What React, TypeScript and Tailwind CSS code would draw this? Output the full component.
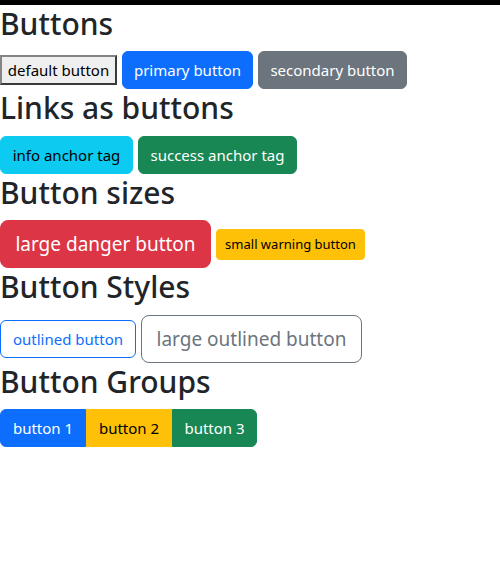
import React from "react";

const base =
  "inline-flex items-center justify-center whitespace-nowrap border border-solid";
const h2 = "mb-2 text-[30px] font-medium leading-[38.4px] text-[#212529]";

export default function App() {
  return (
    <div className="min-h-[568px] bg-white font-['Noto_Sans','Open_Sans',sans-serif] text-[15px] leading-[24px] text-[#212529]">
      <div className="h-[5px] bg-black" />
      <h2 className={h2}>Buttons</h2>
      <div className="flex h-[38px] items-center gap-[5px]">
        <button className="h-[30px] w-[117px] border-2 border-t-[#858585] border-l-[#858585] border-b-[#3a3a3a] border-r-[#3a3a3a] bg-[#efefef] px-[4px] text-[15px] leading-[24px] text-black">
          default button
        </button>
        <button className={`${base} h-[38px] w-[131px] rounded-[6px] border-[#0d6efd] bg-[#0d6efd] text-white`}>
          primary button
        </button>
        <button className={`${base} h-[38px] w-[149px] rounded-[6px] border-[#6c757d] bg-[#6c757d] text-white`}>
          secondary button
        </button>
      </div>

      <h2 className={h2}>Links as buttons</h2>
      <div className="flex h-[38px] items-center gap-[5px]">
        <a className={`${base} h-[38px] w-[133px] rounded-[6px] border-[#0dcaf0] bg-[#0dcaf0] text-black`}>
          info anchor tag
        </a>
        <a className={`${base} h-[38px] w-[159px] rounded-[6px] border-[#198754] bg-[#198754] text-white`}>
          success anchor tag
        </a>
      </div>

      <h2 className={h2}>Button sizes</h2>
      <div className="flex h-[48px] items-center gap-[5px]">
        <button className={`${base} h-[48px] w-[211px] rounded-[8px] border-[#dc3545] bg-[#dc3545] text-[19px] text-white`}>
          large danger button
        </button>
        <button className={`${base} h-[31px] w-[149px] rounded-[4px] border-[#ffc107] bg-[#ffc107] text-[13px] text-black`}>
          small warning button
        </button>
      </div>

      <h2 className={h2}>Button Styles</h2>
      <div className="flex h-[48px] items-center gap-[5px]">
        <button className={`${base} h-[38px] w-[136px] rounded-[6px] border-[#0d6efd] bg-transparent text-[#0d6efd]`}>
          outlined button
        </button>
        <button className={`${base} h-[48px] w-[221px] rounded-[8px] border-[#6c757d] bg-transparent text-[19px] text-[#6c757d]`}>
          large outlined button
        </button>
      </div>

      <h2 className={h2}>Button Groups</h2>
      <div className="flex h-[38px] items-center">
        <button className={`${base} h-[38px] w-[86px] rounded-l-[6px] border-[#0d6efd] bg-[#0d6efd] text-white`}>
          button 1
        </button>
        <button className={`${base} h-[38px] w-[86px] border-[#ffc107] bg-[#ffc107] text-black`}>
          button 2
        </button>
        <button className={`${base} h-[38px] w-[85px] rounded-r-[6px] border-[#198754] bg-[#198754] text-white`}>
          button 3
        </button>
      </div>
    </div>
  );
}
